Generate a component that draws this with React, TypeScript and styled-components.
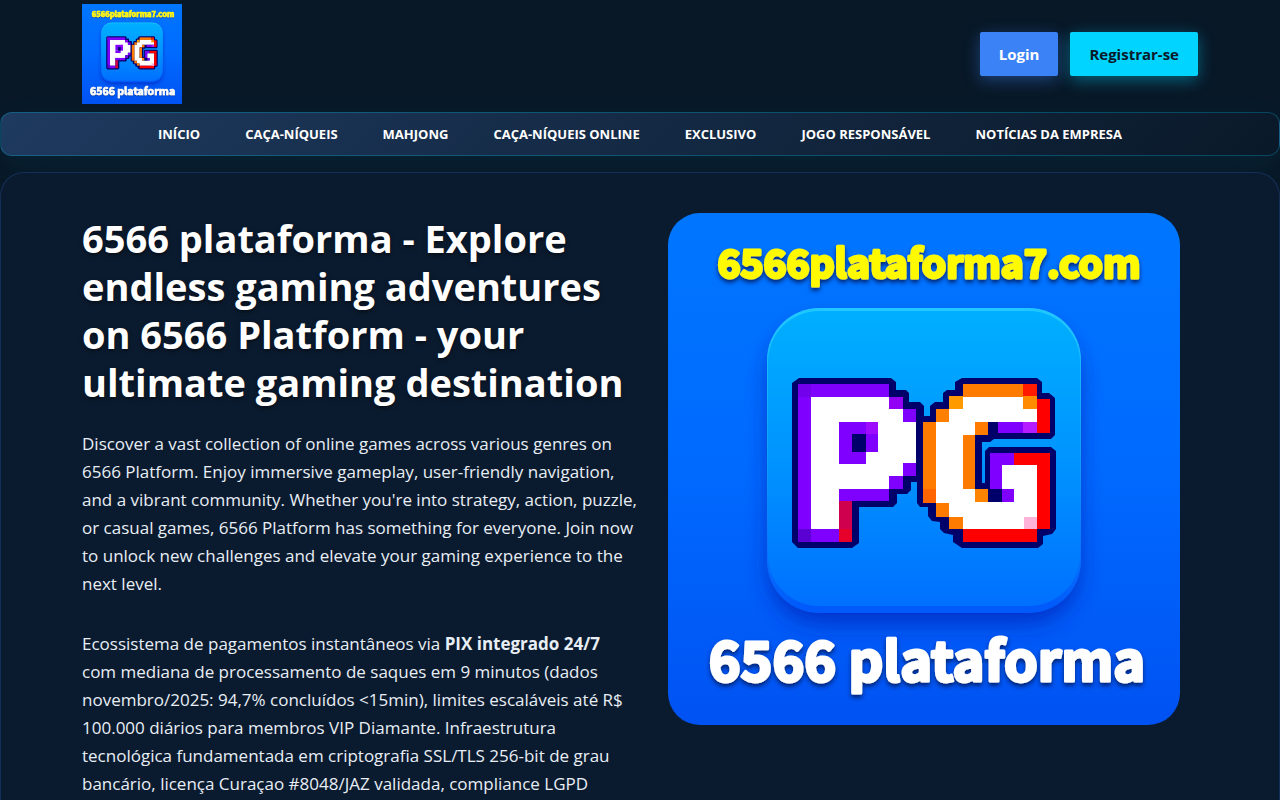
import React from "react";
import styled, { createGlobalStyle, css } from "styled-components";

const sans = `"Open Sans", "Noto Sans", sans-serif`;

const GlobalStyle = createGlobalStyle`
  *, *::before, *::after { box-sizing: border-box; }
  html { background: #0a1929; }
  body {
    margin: 0;
    min-height: 100vh;
    overflow-x: hidden;
    background: #081827;
    color: #ffffff;
    font-family: ${sans};
  }
`;

const Container = styled.div`
  width: 100%;
  max-width: 1140px;
  margin: 0 auto;
  padding: 0 12px;
`;

const Header = styled.header`
  padding: 4px 0 8px;
`;

const HeaderRow = styled(Container)`
  display: flex;
  align-items: center;
  justify-content: space-between;
`;

const LogoLink = styled.a`
  display: block;
  width: 100px;
`;

const Actions = styled.div`
  display: flex;
  gap: 12px;
`;

const ActionButton = styled.button<{ $variant: "login" | "register" }>`
  height: 44px;
  padding: 0 19px;
  border: 0;
  border-radius: 2px;
  font: 700 15px/20px ${sans};
  cursor: pointer;
  ${({ $variant }) =>
    $variant === "login"
      ? css`
          background: #3b82f6;
          color: #ffffff;
          box-shadow: 0 4px 16px rgba(59, 130, 246, 0.4);
        `
      : css`
          background: #00d4ff;
          color: #0a1929;
          box-shadow: 0 4px 16px rgba(0, 212, 255, 0.4);
        `}
`;

const Nav = styled.nav`
  height: 44px;
  border: 1px solid rgba(0, 212, 255, 0.25);
  border-radius: 12px;
  background: linear-gradient(135deg, #1e3a5f 0%, #0a1929 100%);
  box-shadow: 0 8px 32px rgba(0, 212, 255, 0.06);
`;

const NavList = styled.ul`
  display: flex;
  justify-content: center;
  align-items: center;
  gap: 45px;
  height: 100%;
  margin: 0;
  padding: 0 0 2px;
  list-style: none;
`;

const NavLink = styled.a`
  color: #ffffff;
  font-size: 13px;
  font-weight: 700;
  line-height: 20px;
  text-decoration: none;
  text-transform: uppercase;
  white-space: nowrap;
`;

const Hero = styled.section`
  margin-top: 16px;
  padding: 40px 0;
  border: 1px solid rgba(59, 130, 246, 0.2);
  border-radius: 24px;
  background: #0b1b2f;
`;

const HeroGrid = styled(Container)`
  display: grid;
  grid-template-columns: 1fr 1fr;
  align-items: start;
`;

const HeroMedia = styled.div`
  padding-left: 10px;
`;

const Title = styled.h1`
  max-width: 548px;
  margin: 1px 0 24px;
  font-size: 38px;
  font-weight: 700;
  line-height: 48px;
  text-shadow: 0 2px 4px rgba(0, 0, 0, 0.5);
`;

const Paragraph = styled.p`
  margin: 0 0 32px;
  color: #e8eef5;
  font-size: 17px;
  line-height: 28px;
`;

const Art = styled.svg<{ $rounded?: boolean }>`
  display: block;
  width: 100%;
  max-width: 512px;
  margin: 0 auto;
  border-radius: ${({ $rounded }) => ($rounded ? "32px" : "0")};
`;

const ArtText = styled.text<{ $size: number }>`
  font-family: "Noto Sans CJK SC", "Noto Sans", sans-serif;
  font-size: ${({ $size }) => $size}px;
  font-weight: 700;
  stroke-width: 3px;
  stroke-linejoin: round;
`;

type Cell = [x1: number, y1: number, x2: number, y2: number, fill: string];

const violet = "#8000ff";
const orange = "#ff7b00";
const red = "#ff0000";
const navy = "#00006b";

const cells: Cell[] = [
  [130, 171, 221, 184, violet],
  [130, 171, 143, 184, "#7200ea"],
  [130, 184, 143, 316, violet],
  [221, 184, 235, 196, "#9200f5"],
  [235, 196, 248, 209, violet],
  [235, 250, 248, 263, violet],
  [221, 263, 235, 276, violet],
  [171, 276, 221, 288, violet],
  [130, 316, 143, 329, "#5a00d2"],
  [143, 316, 171, 329, violet],
  [171, 288, 184, 316, "#cf004d"],
  [171, 316, 184, 329, "#e6002a"],
  [171, 209, 210, 239, violet],
  [171, 239, 198, 251, violet],
  [198, 209, 210, 221, "#9e0cff"],
  [184, 221, 198, 239, navy],
  [295, 171, 355, 184, orange],
  [355, 171, 369, 184, "#ff1a00"],
  [281, 183, 295, 196, "#ff9a00"],
  [355, 183, 369, 196, "#ff8c00"],
  [268, 196, 281, 209, "#ff8000"],
  [255, 209, 268, 276, orange],
  [255, 276, 268, 290, "#ff6400"],
  [307, 209, 320, 222, orange],
  [295, 222, 307, 276, orange],
  [307, 276, 320, 289, "#ff8400"],
  [268, 290, 281, 304, orange],
  [281, 304, 295, 316, orange],
  [369, 186, 382, 220, red],
  [330, 209, 355, 220, violet],
  [355, 209, 369, 220, "#b51cff"],
  [322, 240, 346, 252, violet],
  [322, 252, 334, 276, violet],
  [334, 276, 346, 289, violet],
  [320, 276, 334, 289, navy],
  [346, 240, 382, 252, red],
  [369, 252, 382, 316, red],
  [295, 316, 369, 329, red],
  [356, 304, 369, 316, "#ffb3d9"],
];

function BrandArt({ id, rounded }: { id: string; rounded?: boolean }) {
  return (
    <Art viewBox="0 0 512 512" role="img" aria-label="6566 plataforma" $rounded={rounded}>
      <defs>
        <linearGradient id={`${id}-bg`} x1="0" y1="0" x2="0" y2="1">
          <stop offset="0" stopColor="#0076ff" />
          <stop offset="0.5" stopColor="#006aff" />
          <stop offset="1" stopColor="#0052f2" />
        </linearGradient>
        <linearGradient id={`${id}-tile`} x1="0" y1="0" x2="0" y2="1">
          <stop offset="0" stopColor="#00afff" />
          <stop offset="0.5" stopColor="#0094ff" />
          <stop offset="1" stopColor="#0070ff" />
        </linearGradient>
        <linearGradient id={`${id}-edge`} x1="0" y1="0" x2="0" y2="1">
          <stop offset="0" stopColor="#20c8ff" />
          <stop offset="0.5" stopColor="#109cff" />
          <stop offset="1" stopColor="#0058fa" />
        </linearGradient>
        <filter id={`${id}-soft`} x="-20%" y="-20%" width="140%" height="140%">
          <feGaussianBlur stdDeviation="11" />
        </filter>
        <filter id={`${id}-drop`} x="-5%" y="-20%" width="110%" height="150%">
          <feDropShadow dx="0" dy="3" stdDeviation="2" floodColor="#001a66" floodOpacity="0.9" />
        </filter>
      </defs>
      <rect width="512" height="512" fill={`url(#${id}-bg)`} />
      <rect x="101" y="112" width="310" height="298" rx="52" fill="#0024b8" opacity="0.75" filter={`url(#${id}-soft)`} />
      <rect x="99" y="95" width="314" height="305" rx="52" fill={`url(#${id}-edge)`} />
      <rect x="100" y="98" width="312" height="295" rx="51" fill={`url(#${id}-tile)`} />
      <path
        fill={navy}
        d="M124 170 L131 165 H223 L228 169 V177 H238 L241 180 V189 H252 L256 193 V203 H262 V193 L267 189 H275 V180 L279 177 H287 V169 L294 165 H369 L374 169 V180 H381 L387 185 V222 L383 226 H326 L322 229 H314 V270 H317 V238 L321 234 H383 L388 238 V316 L384 321 L375 323 V331 L370 335 H294 L285 329 V322 L276 320 L272 316 V309 L264 308 L260 303 V294 H252 L249 290 V269 H243 V277 L239 281 H229 V290 L225 294 H191 V330 L184 335 H130 L124 329 Z"
      />
      <path
        fill="#fff"
        d="M143 184 H221 V196 H235 V209 H248 V250 H235 V263 H221 V276 H171 V316 H143 Z M295 183 H369 V209 H307 V222 H295 V276 H307 V289 H346 V276 H334 V252 H369 V316 H295 V304 H281 V290 H268 V209 H281 V196 H295 Z"
      />
      <g shapeRendering={rounded ? "crispEdges" : "auto"}>
        {cells.map(([x1, y1, x2, y2, fill]) => (
          <rect key={`${x1}-${y1}-${x2}-${y2}`} x={x1} y={y1} width={x2 - x1} height={y2 - y1} fill={fill} />
        ))}
      </g>
      <g filter={`url(#${id}-drop)`} textAnchor="middle">
        <ArtText x="261" y="65" $size={39} fill="#fffa00" stroke="#fffa00">
          6566plataforma7.com
        </ArtText>
        <ArtText x="259" y="468" $size={54} fill="#fff" stroke="#fff">
          6566 plataforma
        </ArtText>
      </g>
    </Art>
  );
}

const navItems = [
  "Início",
  "Caça-níqueis",
  "Mahjong",
  "Caça-níqueis online",
  "Exclusivo",
  "Jogo responsável",
  "Notícias da empresa",
];

export default function App() {
  return (
    <>
      <GlobalStyle />
      <Header>
        <HeaderRow>
          <LogoLink href="#">
            <BrandArt id="logo" />
          </LogoLink>
          <Actions>
            <ActionButton type="button" $variant="login">Login</ActionButton>
            <ActionButton type="button" $variant="register">Registrar-se</ActionButton>
          </Actions>
        </HeaderRow>
      </Header>
      <Nav>
        <NavList>
          {navItems.map((item) => (
            <li key={item}>
              <NavLink href="#">{item}</NavLink>
            </li>
          ))}
        </NavList>
      </Nav>
      <main>
        <Hero>
          <HeroGrid>
            <div>
              <Title>
                6566 plataforma - Explore endless gaming adventures on 6566 Platform - your ultimate gaming
                destination
              </Title>
              <Paragraph>
                Discover a vast collection of online games across various genres on
                <br />
                6566 Platform. Enjoy immersive gameplay, user-friendly navigation,
                <br />
                and a vibrant community. Whether you're into strategy, action, puzzle,
                <br />
                or casual games, 6566 Platform has something for everyone. Join now
                <br />
                to unlock new challenges and elevate your gaming experience to the
                <br />
                next level.
              </Paragraph>
              <Paragraph>
                Ecossistema de pagamentos instantâneos via <strong>PIX integrado 24/7</strong>
                <br />
                com mediana de processamento de saques em 9 minutos (dados
                <br />
                novembro/2025: 94,7% concluídos &lt;15min), limites escaláveis até R$
                <br />
                100.000 diários para membros VIP Diamante. Infraestrutura
                <br />
                tecnológica fundamentada em criptografia SSL/TLS 256-bit de grau
                <br />
                bancário, licença Curaçao #8048/JAZ validada, compliance LGPD
              </Paragraph>
            </div>
            <HeroMedia>
              <BrandArt id="hero" rounded />
            </HeroMedia>
          </HeroGrid>
        </Hero>
      </main>
    </>
  );
}
